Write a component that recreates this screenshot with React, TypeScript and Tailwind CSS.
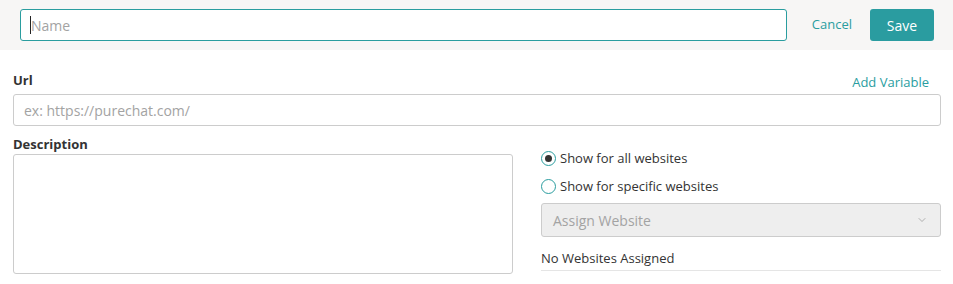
import { ChevronDown } from "lucide-react";

function Radio({ checked, label }: { checked?: boolean; label: string }) {
  return (
    <label className="flex h-5 items-center gap-[4px] text-[13px] leading-5 text-[#333]">
      <span className="flex h-[15px] w-[15px] items-center justify-center rounded-full border border-[#2a9d9f] bg-white">
        {checked && <span className="h-[7px] w-[7px] rounded-full bg-[#333]" />}
      </span>
      {label}
    </label>
  );
}

export default function App() {
  return (
    <div className="min-h-[284px] w-full bg-white font-['Open_Sans',sans-serif] text-[#333]">
      <div className="flex h-[50px] items-center bg-[#f7f6f5] pl-5 pr-[19px]">
        <div className="relative flex-1">
          <input
            placeholder="Name"
            className="h-8 w-full rounded-[3px] border border-[#2a9d9f] bg-white px-[10px] text-[14px] outline-none placeholder:text-[#a3a3a3]"
          />
          <span className="absolute left-[10px] top-[7px] h-[18px] w-px bg-[#222]" />
        </div>
        <a className="ml-[25px] text-[13px] text-[#2a9d9f]">Cancel</a>
        <button className="ml-[18px] h-8 w-16 rounded-[3px] bg-[#2a9ca0] text-[14px] text-white">
          Save
        </button>
      </div>

      <div className="pl-[13px] pr-[12px]">
        <div className="mt-5 flex h-5 items-center justify-between">
          <span className="text-[13px] font-bold leading-5">Url</span>
          <a className="mr-[12px] mt-1 text-[13px] leading-5 text-[#2a9d9f]">Add Variable</a>
        </div>
        <input
          placeholder="ex: https://purechat.com/"
          className="mt-1 h-8 w-full rounded-[3px] border border-[#ccc] px-[10px] text-[14px] outline-none placeholder:text-[#a3a3a3]"
        />

        <div className="mt-2 grid grid-cols-[500px_400px] gap-x-[28px]">
          <div>
            <div className="h-5 text-[13px] font-bold leading-5">Description</div>
            <textarea className="block h-[120px] w-full resize-none rounded-[3px] border border-[#ccc] outline-none" />
          </div>
          <div className="pt-[14px]">
            <Radio checked label="Show for all websites" />
            <div className="mt-2">
              <Radio label="Show for specific websites" />
            </div>
            <div className="mt-[7px] flex h-[34px] items-center justify-between rounded-[3px] border border-[#ccc] bg-[#eee] pl-[11px] pr-[12px]">
              <span className="text-[14px] text-[#a3a3a3]">Assign Website</span>
              <ChevronDown size={12} strokeWidth={1.25} className="text-[#888]" />
            </div>
            <div className="mt-[11px] border-b border-[#e5e5e5] pb-[2px] text-[13px] leading-5">
              No Websites Assigned
            </div>
          </div>
        </div>
      </div>
    </div>
  );
}
